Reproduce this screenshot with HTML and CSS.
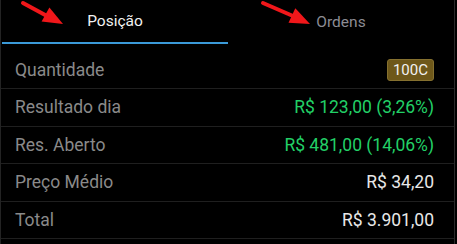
FILE: index.html
```html
<!DOCTYPE html>
<html>
<head>
	<title>Posição</title>
	<link rel="stylesheet" href="styles.css">
</head>
<body>
	<div class="panel">
		<div class="tabs">
			<div class="tab active">Posição</div>
			<div class="tab">Ordens</div>
		</div>
		<div class="rows">
			<div class="row">
				<span class="label">Quantidade</span>
				<span class="badge">100C</span>
			</div>
			<div class="row">
				<span class="label">Resultado dia</span>
				<span class="value up">R$ 123,00 (3,26%)</span>
			</div>
			<div class="row">
				<span class="label">Res. Aberto</span>
				<span class="value up">R$ 481,00 (14,06%)</span>
			</div>
			<div class="row">
				<span class="label">Preço Médio</span>
				<span class="value">R$ 34,20</span>
			</div>
			<div class="row">
				<span class="label">Total</span>
				<span class="value">R$ 3.901,00</span>
			</div>
		</div>
		<!-- annotation arrows -->
		<svg class="arrows" width="457" height="44" viewBox="0 0 457 44">
			<line x1="23" y1="3" x2="47" y2="16" stroke="#f0171a" stroke-width="4" stroke-linecap="round"/>
			<polygon points="41.6,21.4 49.4,7.4 63,24" fill="#f0171a"/>
			<line x1="263" y1="3" x2="293" y2="16" stroke="#f0171a" stroke-width="4" stroke-linecap="round"/>
			<polygon points="288.5,22.7 295.3,8.3 310,24" fill="#f0171a"/>
		</svg>
	</div>
</body>
</html>
```

FILE: styles.css
```css
body {
	margin: 0;
	background: #000;
	font-family: Roboto, "Liberation Sans", sans-serif;
}
.panel {
	position: relative;
	width: 453px;
	height: 244px;
	border-left: 1px solid #232323;
	border-right: 1px solid #2a2a2a;
}
.tabs {
	display: flex;
	height: 44px;
}
.tab {
	flex: 1;
	display: flex;
	align-items: center;
	justify-content: center;
	font-size: 15.5px;
	color: #8c8c94;
	box-sizing: border-box;
	padding-bottom: 1px;
}
.tab.active {
	color: #f2f2f2;
	border-bottom: 2px solid #3b9ad8;
	margin-left: 1px;
}
.rows {
	padding-top: 7.5px;
}
.row {
	display: flex;
	align-items: center;
	justify-content: space-between;
	height: 36.5px;
	padding: 0 20px 0 14px;
	border-bottom: 1px solid #1f1f1f;
}
.label {
	font-size: 17.5px;
	color: #8a8a8a;
}
.value {
	font-size: 17.5px;
	color: #e8e8e8;
}
.value.up {
	color: #22d067;
}
.badge {
	font-size: 15px;
	color: #f2f2f2;
	background: #6e581a;
	border: 1px solid #85702f;
	border-radius: 3px;
	padding: 2px 5px;
	line-height: 16px;
}
.arrows {
	position: absolute;
	left: -1px;
	top: 0;
}
```
